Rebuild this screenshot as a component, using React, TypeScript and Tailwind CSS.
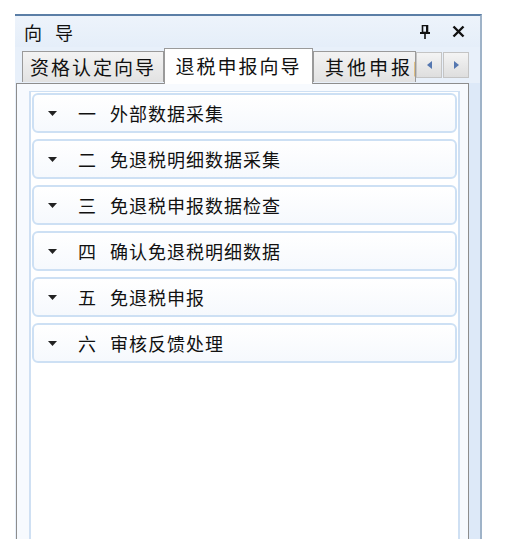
const steps = [
  { num: '一', label: '外部数据采集' },
  { num: '二', label: '免退税明细数据采集' },
  { num: '三', label: '免退税申报数据检查' },
  { num: '四', label: '确认免退税明细数据' },
  { num: '五', label: '免退税申报' },
  { num: '六', label: '审核反馈处理' },
];

const font = { fontFamily: '"Noto Sans CJK SC", "Noto Sans", sans-serif' };

function PinIcon() {
  return (
    <svg width="10" height="14" viewBox="0 0 10 14" className="block">
      <rect x="2.5" y="0.5" width="5" height="7" fill="none" stroke="#111" strokeWidth="1.6" />
      <rect x="6" y="1" width="1.5" height="6" fill="#111" />
      <rect x="0" y="7" width="10" height="2" fill="#111" />
      <rect x="4.2" y="9" width="1.6" height="5" fill="#111" />
    </svg>
  );
}

function CloseIcon() {
  return (
    <svg width="13" height="13" viewBox="0 0 13 13" className="block">
      <path d="M1.5 1.5 L11.5 11.5 M11.5 1.5 L1.5 11.5" stroke="#111" strokeWidth="2.4" />
    </svg>
  );
}

function Caret() {
  return (
    <svg width="9" height="5" viewBox="0 0 9 5" className="block">
      <path d="M0 0 H9 L4.5 5 Z" fill="#222" />
    </svg>
  );
}

function ScrollButton({ dir }: { dir: 'left' | 'right' }) {
  return (
    <div className="w-[26px] h-[26px] border border-[#c4c4c4] bg-gradient-to-b from-[#f4f4f4] to-[#dedede] flex items-center justify-center">
      <svg width="5" height="8" viewBox="0 0 5 8" className="block">
        {dir === 'left' ? (
          <path d="M5 0 V8 L0 4 Z" fill="#5577b0" />
        ) : (
          <path d="M0 0 V8 L5 4 Z" fill="#5577b0" />
        )}
      </svg>
    </div>
  );
}

export default function App() {
  return (
    <div className="w-[510px] h-[539px] bg-white pt-[14px] pl-[15px] overflow-hidden" style={font}>
      <div className="w-[467px] h-full flex flex-col border-t-2 border-[#5b7ea6] border-r-2 border-r-[#9fb3c8] bg-[#e8f0fa]">
        {/* header */}
        <div className="h-[31px] flex items-center justify-between pl-[9px] pr-[15px] bg-gradient-to-b from-[#edf3fb] to-[#e5eef9]">
          <span className="text-[18px] leading-none text-[#111] tracking-[13px]">向导</span>
          <div className="flex items-center gap-[22px]">
            <PinIcon />
            <CloseIcon />
          </div>
        </div>

        {/* tabs */}
        <div className="h-[36px] flex items-end pl-[7px] relative z-10">
          <div className="h-[31px] w-[142px] border border-b-0 border-[#9a9a9a] bg-gradient-to-b from-[#f3f3f3] to-[#e2e2e2] flex items-center justify-center text-[19px] text-[#111] tracking-[2px] mb-[1px]">
            资格认定向导
          </div>
          <div className="h-[36px] w-[149px] border border-b-0 border-[#9a9a9a] bg-white flex items-center justify-center text-[19px] text-[#111] tracking-[2px] -mb-[1px]">
            退税申报向导
          </div>
          <div className="h-[31px] w-[103px] border border-b-0 border-[#9a9a9a] bg-gradient-to-b from-[#f3f3f3] to-[#e2e2e2] flex items-center pl-[11px] overflow-hidden whitespace-nowrap text-[19px] text-[#111] tracking-[3px] mb-[1px]">
            其他申报向导
          </div>
          <div className="flex self-start mt-[5px] gap-[1px]">
            <ScrollButton dir="left" />
            <ScrollButton dir="right" />
          </div>
        </div>

        {/* body */}
        <div className="flex-1 flex">
          <div className="w-[453px] ml-[1px] border border-b-0 border-[#8d8d8d] bg-[#f7fafe] pl-[12px] pr-[8px] pt-[7px] flex">
            <div className="flex-1 border-x-2 border-t border-[#cfe0f3] bg-white px-[1px] pt-[1px] flex flex-col gap-[6px]">
              {steps.map((s) => (
                <div
                  key={s.num}
                  className="h-[40px] rounded-[6px] border-2 border-[#cde0f4] bg-gradient-to-b from-white to-[#f6f9fd] flex items-center pl-[14px] text-[18px] text-[#111]"
                >
                  <Caret />
                  <span className="ml-[21px] w-[32px]">{s.num}</span>
                  <span className="tracking-[1px]">{s.label}</span>
                </div>
              ))}
            </div>
          </div>
          <div className="w-[11px] bg-[#dde9f8]" />
        </div>
      </div>
    </div>
  );
}
